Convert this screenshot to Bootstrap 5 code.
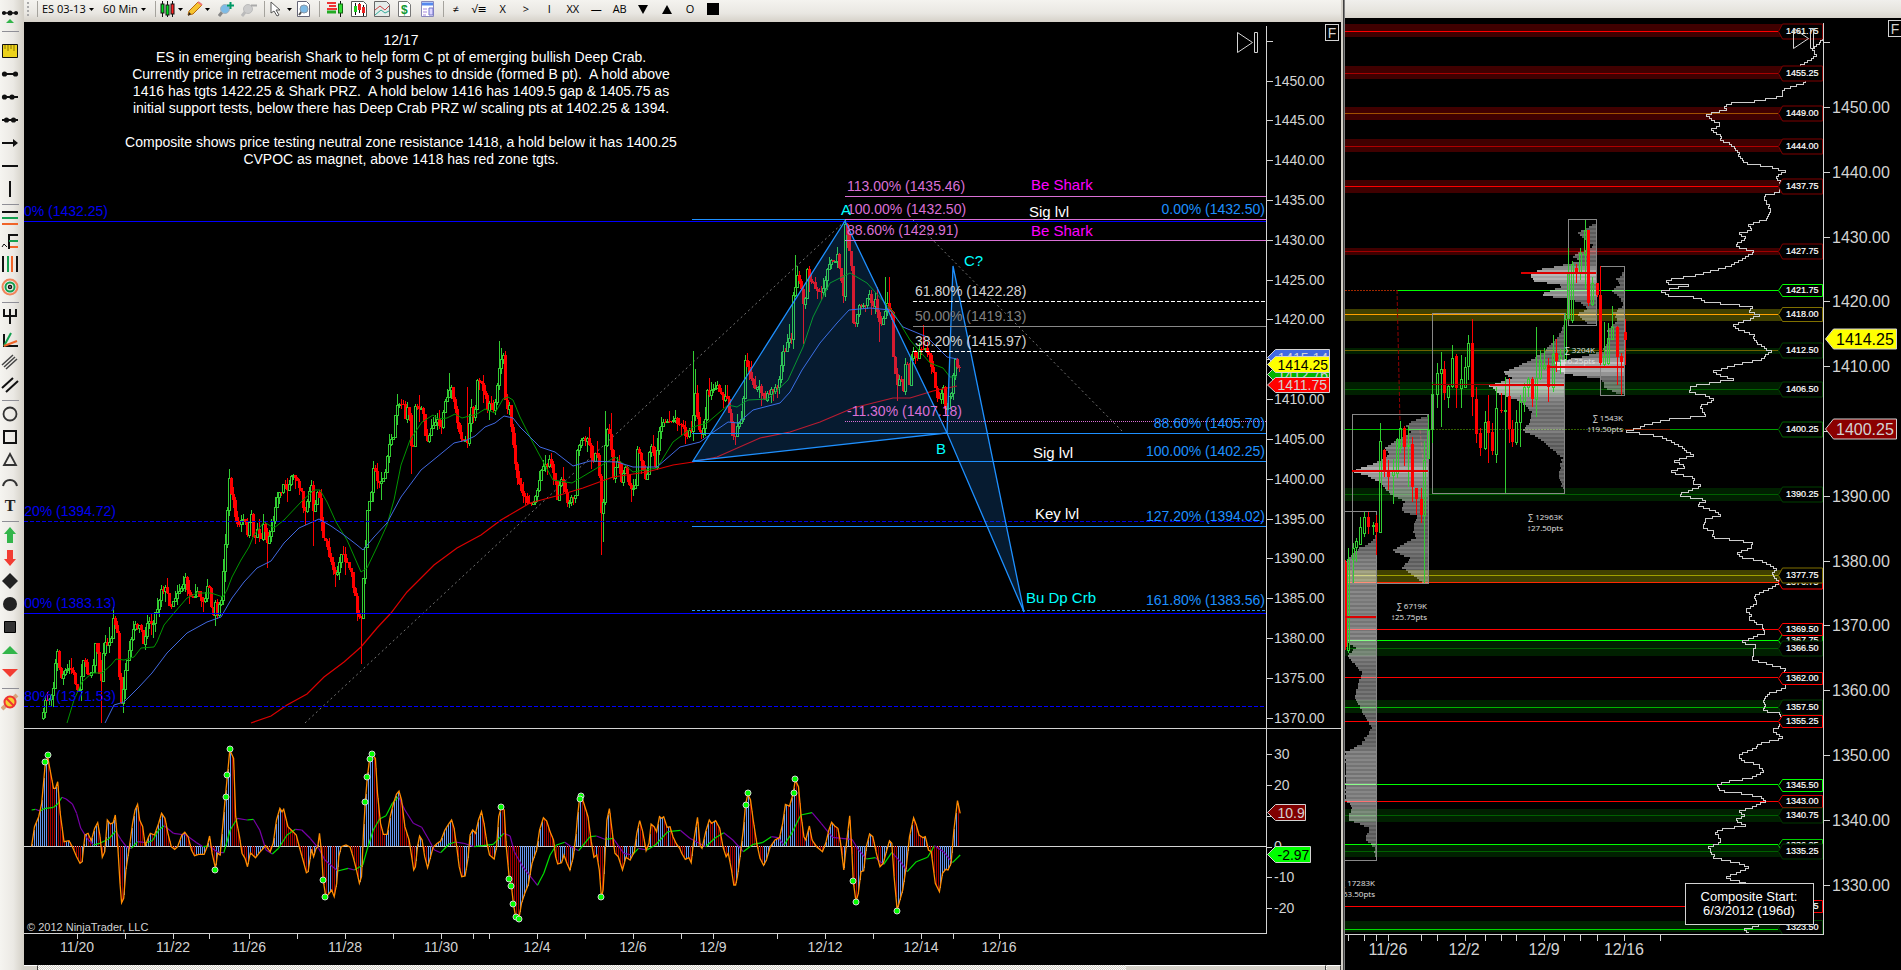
<!DOCTYPE html>
<html lang="en">
<head>
<meta charset="utf-8">
<meta name="viewport" content="width=device-width, initial-scale=1">
<title>ES 03-13 chart</title>
<link href="https://cdn.jsdelivr.net/npm/bootstrap@5.3.0/dist/css/bootstrap.min.css" rel="stylesheet">
<style>
body{background:#000;font-family:"Open Sans","DejaVu Sans",sans-serif;font-size:11px;color:#000}
.leftside{flex:1341 1 0;min-width:0}
.rightside{flex:556 1 0;min-width:0}
.workarea{min-width:0}
.sidetools{width:24px;background:linear-gradient(90deg,#f5f4f0,#ebe9e4 55%,#d3cfc6)}
.sidetools button,.toptools button{border:0;background:none;padding:0;display:flex;align-items:center;justify-content:center}
.sidetools button{width:20px;height:23px;flex:none}
.sidetools button.firsttool{height:27px}
.sidetools hr{width:17px;height:1px;margin:4px 0 1px 2px;border:0;background:#8f8f96;opacity:1;flex:none}
.sidetools hr.tallrule{margin-bottom:7px}
.toptools{height:22px;background:linear-gradient(#f4f3ef,#e9e7e2 60%,#d5d1c8);padding:0 0 4px 3px}
.toptools button{height:16px;flex:none}
.toptools svg{flex:none}
.toptools select{appearance:none;border:0;background:none;padding:0;font-size:11px;line-height:16px;height:16px;color:#000}
.symbolpick{width:46px}.spanpick{width:37px}
.toolrule{width:1px;height:16px;background:#a5a39d;flex:none}
.grip{width:2px;height:14px;background:repeating-linear-gradient(#aaa 0 2px,transparent 2px 4px);flex:none}
.marks{width:281px}
.marks button{flex:1 1 0}
.w15{width:15px}.w23{width:23px}
.chartbox{min-height:0;flex:1 1 0;background:#000}
.chartbox svg{display:block;width:100%;height:100%}
.fixbtn{position:absolute;right:2px;top:2px;width:14px;height:17px;padding:0;border:1px solid #d3d3d3;background:#000;color:#d3d3d3;font:14px/14px "Liberation Sans",sans-serif}
.fixbtn.edge{right:-1px}
.divide{width:4px;background:linear-gradient(90deg,#d4d0c8 0 2px,#404040 2px 3px,#808080 3px)}
.caphead{height:18px;background:linear-gradient(#f0efec,#e6e4de 60%,#d9d5cd)}
.scroller{height:5px;background:repeating-conic-gradient(#fff 0 25%,#d4d0c8 0 50%) 0 0/2px 2px}
.scroller span{background:#d4d0c8;border-top:1px solid #fff;border-right:1px solid #404040}
.capend{width:14px}.thumb{width:200px;margin-right:1px}
svg text{font-family:"Liberation Sans",Arial,sans-serif;white-space:pre}
svg text.tiny{font-family:"Open Sans",sans-serif}
svg text.slab{font-family:"Liberation Serif",serif}
.crisp{shape-rendering:crispEdges}
</style>
<script src="https://cdn.jsdelivr.net/npm/bootstrap@5.3.0/dist/js/bootstrap.bundle.min.js"></script>
</head>
<body class="m-0">
<div class="d-flex vh-100 overflow-hidden">
 <section class="leftside d-flex">
  <nav class="sidetools d-flex flex-column flex-shrink-0" id="sidetools" aria-label="Drawing tools"></nav>
  <div class="workarea d-flex flex-column flex-grow-1">
   <div class="toptools d-flex align-items-center">
    <span class="grip me-1"></span><span class="toolrule ms-1"></span>
    <select class="symbolpick ms-1" aria-label="Instrument"><option>ES 03-13</option></select>
    <svg width="7" height="5"><path d="M1 1h5L3.500 4z"/></svg>
    <select class="spanpick ms-2" aria-label="Interval"><option>60 Min</option></select>
    <svg width="7" height="5"><path d="M1 1h5L3.500 4z"/></svg>
    <span class="toolrule ms-2 me-1"></span>
    <button class="w23" aria-label="Chart style"><svg width="24" height="16"><g stroke="#111"><path d="M2.500 0v16M7.500 0v16M12.500 0v16"/><rect x="1" y="3" width="3" height="9" fill="#0d2"/><rect x="6" y="4" width="3" height="10" fill="#0d2"/><rect x="11" y="3" width="3" height="10" fill="#f22"/></g><path d="M18 7h5l-2.500 3z"/></svg></button>
    <button class="w23 ms-1" aria-label="Draw"><svg width="24" height="16"><path d="M1 14l1-4 9-9 4 3-9 9z" fill="#f6c430" stroke="#b76a10"/><path d="M1 15l1-4 2 2z" fill="#222"/><path d="M11 1l4 3" stroke="#e77" stroke-width="2"/><path d="M18 7h5l-2.500 3z"/></svg></button>
    <button class="w15 ms-2" aria-label="Zoom in"><svg width="16" height="16"><path d="M1 15l4-5" stroke="#888" stroke-width="3"/><circle cx="7" cy="8" r="4.500" fill="#7dbbe6" stroke="#a9b4bd"/><path d="M12.500 1v7M9 4.500h7" stroke="#096" stroke-width="2"/></svg></button>
    <button class="w15 ms-2" aria-label="Zoom out"><svg width="16" height="16"><path d="M1 15l4-5" stroke="#bbb" stroke-width="3"/><circle cx="7" cy="8" r="4.500" fill="#ccc" stroke="#bbb"/><path d="M10 4.500h6" stroke="#aaa" stroke-width="2"/></svg></button>
    <span class="toolrule ms-2 me-1"></span>
    <button class="w23" aria-label="Pointer"><svg width="24" height="16"><path d="M2 1v11l3-2 3 5 2-1-3-5h4z" fill="#fff" stroke="#555"/><path d="M18 7h5l-2.500 3z"/></svg></button>
    <button class="w15 ms-1" aria-label="Data box"><svg width="16" height="16"><path d="M1.500.500h9l3 3v12h-12z" fill="#fff" stroke="#667"/><path d="M3 14l3-4" stroke="#555" stroke-width="2"/><circle cx="8" cy="8" r="4" fill="#7dbbe6" stroke="#89a"/></svg></button>
    <span class="toolrule ms-2 me-1"></span>
    <button class="w15 ms-1" aria-label="Chart trader"><svg width="17" height="16"><path d="M0 2h9M0 8h10M2 5h7" stroke="#e33" stroke-width="2"/><path d="M0 11h9" stroke="#2a2" stroke-width="3"/><path d="M13.500 0v16" stroke="#111"/><rect x="11.500" y="3" width="4" height="9" fill="#3d3" stroke="#161"/></svg></button>
    <button class="w15 ms-2" aria-label="Data series"><svg width="16" height="16"><path d="M.500.500h12l3 3v12h-15z" fill="#fff" stroke="#555"/><path d="M4.500 2v12M8.500 2v10M12.500 4v11" stroke="#111"/><rect x="3" y="5" width="3" height="6" fill="#2c2"/><rect x="7" y="3" width="3" height="6" fill="#e22"/><rect x="11" y="6" width="3" height="6" fill="#e22"/></svg></button>
    <button class="w15 ms-2" aria-label="Indicators"><svg width="16" height="16"><path d="M.500.500h12l3 3v12h-15z" fill="#e4ece9" stroke="#666"/><path d="M1 9l5-4 5 4 4-4" fill="none" stroke="#c44"/><path d="M1 14l6-5 4 3 4-2" fill="none" stroke="#3a9"/></svg></button>
    <button class="w15 ms-2" aria-label="Strategies"><svg width="16" height="16"><path d="M1.500.500h9l3 3v12h-12z" fill="#fff" stroke="#777"/><text x="4" y="13" font-size="12" font-weight="700" fill="#193">$</text></svg></button>
    <button class="w15 ms-2" aria-label="Properties"><svg width="16" height="16"><path d="M1.500.500h12v15h-12z" fill="#fff" stroke="#88b"/><path d="M2 3h11" stroke="#58e" stroke-width="3"/><path d="M3 8h4M3 11h4M3 14h3" stroke="#a8d"/><path d="M9 7h4v7H9z" fill="#dcd6ff" stroke="#77c"/></svg></button>
    <span class="toolrule ms-2"></span>
    <div class="marks d-flex"><button>≠</button><button>√≡</button><button>X</button><button>&gt;</button><button>I</button><button>XX</button><button>—</button><button>AB</button><button aria-label="Triangle down"><svg width="10" height="9"><path d="M0 0h10L5 9z"/></svg></button><button aria-label="Triangle up"><svg width="10" height="9"><path d="M0 9h10L5 0z"/></svg></button><button>O</button><button aria-label="Square"><svg width="12" height="12"><path d="M0 0h12v12H0z"/></svg></button></div>
   </div>
   <div class="chartbox position-relative"><svg id="mainchart" viewBox="24 22 1317 943" role="img" aria-label="ES 60 minute chart"></svg><button class="fixbtn">F</button></div>
   <div class="scroller d-flex flex-shrink-0"><span class="capend"></span><span class="thumb ms-auto"></span><span class="capend"></span></div>
  </div>
 </section>
 <div class="divide flex-shrink-0"></div>
 <section class="rightside d-flex flex-column">
  <header class="caphead flex-shrink-0"></header>
  <div class="chartbox position-relative overflow-hidden"><svg id="sidechart" viewBox="1345 18 556 952" role="img" aria-label="Composite profile chart"></svg><button class="fixbtn edge">F</button></div>
 </section>
</div>
<script>
/* ---------- drawing tool icons ---------- */
const ic=b=>`<svg width="18" height="18" viewBox="0 0 18 18" fill="none" stroke="#111" stroke-width="2">${b}</svg>`;
const tools=[
 ['Markers','<path d="M1 8h16" stroke-width="1.500"/><g fill="#111" stroke="none"><circle cx="3" cy="8" r="2"/><circle cx="9" cy="8" r="2.500"/><circle cx="15" cy="8" r="2"/></g><path d="M4 19l5-5 5 5z" fill="#33b54a" stroke="none"/>'],0,
 ['Ruler','<path d="M1.500 2.500h15v13h-15z" fill="#ecd21c" stroke-width="1"/><path d="M4 3v4M7 3v6M10 3v4M13 3v6" stroke="#8a7400" stroke-width="1"/>'],
 ['Line','<path d="M3 9h12"/><g fill="#111" stroke="none"><circle cx="3.500" cy="9" r="2.600"/><circle cx="14.500" cy="9" r="2.600"/></g>'],
 ['Ray','<path d="M3 9h14"/><g fill="#111" stroke="none"><circle cx="3.500" cy="9" r="2.600"/><circle cx="11" cy="9" r="2.600"/></g>'],
 ['Extended line','<path d="M1 9h16"/><g fill="#111" stroke="none"><circle cx="5.500" cy="9" r="2.600"/><circle cx="12.500" cy="9" r="2.600"/></g>'],
 ['Arrow line','<path d="M1 9h14"/><path d="M12 5l5 4-5 4z" fill="#111" stroke="none"/>'],
 ['Horizontal line','<path d="M1 9h16"/>'],['Vertical line','<path d="M9 1v16"/>'],0,
 ['Fibonacci retracement','<path d="M1 3h16"/><path d="M1 9h16" stroke="#14a050"/><path d="M1 15h16" stroke="#f06428"/>'],
 ['Fibonacci extension','<path d="M8 17V3h9"/><path d="M8 9h9" stroke="#14a050"/><path d="M9 15h8" stroke="#f06428"/><path d="M1 15l2-3 3 3" stroke-width="1"/>'],
 ['Fibonacci time','<path d="M2 1v16"/><path d="M7 1v16" stroke="#14a050"/><path d="M11 1v16" stroke="#f06428"/><path d="M16 1v16"/>'],
 ['Fibonacci circle','<circle cx="9" cy="9" r="7.500" stroke="#f0845a"/><circle cx="9" cy="9" r="4.500" stroke="#14a050"/><circle cx="9" cy="9" r="1.500" stroke-width="1.500"/>'],0,
 ['Pitchfork','<path d="M3 2v7h12V2M9 2v15"/>'],
 ['Gann fan','<path d="M3 4v12h14"/><path d="M3 16L10 3" stroke="#14a050"/><path d="M3 16l13-5" stroke="#f06428"/>'],
 ['Regression channel','<path d="M1 12L12 2M3 14L14 4M5 16L16 6" stroke="#444" stroke-width="1.500"/>'],
 ['Trend channel','<path d="M1 12L12 2M5 16L17 5"/>'],0,
 ['Ellipse','<circle cx="9" cy="9" r="6.500" stroke="#333" stroke-width="1.800"/>'],['Rectangle','<path d="M3 3h12v12H3z"/>'],
 ['Triangle','<path d="M9 3l6 11H3z" stroke="#333" stroke-width="1.800"/>'],['Arc','<path d="M2 12c2-8 12-8 14 0" stroke="#333"/>'],
 ['Text','<text class="slab" x="9" y="14" text-anchor="middle" font-size="16" font-weight="700" fill="#222" stroke="none">T</text>'],0,
 ['Arrow up','<path d="M9 1l6 7h-3v9H6V8H3z" fill="#33b54a" stroke="none"/>'],['Arrow down','<path d="M9 17l6-7h-3V1H6v9H3z" fill="#f23c32" stroke="none"/>'],
 ['Diamond','<path d="M9 1l8 8-8 8-8-8z" fill="#222" stroke="none"/>'],['Dot','<circle cx="9" cy="9" r="7" fill="#222" stroke="none"/>'],
 ['Square','<path d="M3.500 3.500h11v11h-11z" fill="#333" stroke="#000" stroke-width="1"/>'],
 ['Triangle up','<path d="M1 13l8-8 8 8z" fill="#33b54a" stroke="none"/>'],['Triangle down','<path d="M1 5l8 8 8-8z" fill="#f23c32" stroke="none"/>'],0,
 ['Remove drawings','<path d="M1 16L16 2" stroke="#d9a27a" stroke-width="4"/><circle cx="9" cy="9" r="5.500" fill="#f5d030" stroke="#e33"/><path d="M5 5l8 8" stroke="#e33"/>']];
let seps=0;
document.getElementById('sidetools').innerHTML=tools.map((t,i)=>t?`<button aria-label="${t[0]}" class="${i?'':'firsttool'}">${ic(t[1])}</button>`:`<hr class="${seps++?'':'tallrule'}">`).join('');

/* ---------- helpers ---------- */
const pairs=s=>s.trim().split(/\s+/).map(p=>p.split(',').map(Number));
const conv=(s,ox,sx,oy)=>pairs(s).map(([x,y])=>[ox+x/sx,oy+y/3]);
const poly=(pts,c,w=1,x='')=>`<polyline points="${pts.map(p=>p[0].toFixed(1)+','+p[1].toFixed(1)).join(' ')}" fill="none" stroke="${c}" stroke-width="${w}" ${x}/>`;
const txt=(x,y,s,c,z=14,a='start',e='')=>`<text x="${x}" y="${y}" fill="${c}" font-size="${z}" text-anchor="${a}" ${e}>${s}</text>`;
const hl=(x1,x2,y,c,x='',w=1)=>`<path class="crisp" d="M${x1} ${y}.5H${x2}" stroke="${c}" stroke-width="${w}" ${x}/>`;
const rect=(x,y,w,h,f,e='')=>`<rect x="${x}" y="${y}" width="${w}" height="${h}" fill="${f}" ${e}/>`;
function at(p,x){for(let i=1;i<p.length;i++)if(x<=p[i][0]){const a=p[i-1],b=p[i];return a[1]+(b[1]-a[1])*(x-a[0])/((b[0]-a[0])||1)}return p[p.length-1][1]}
let seed=7;const rnd=()=>(seed=(seed*16807)%2147483647)/2147483647;
const G='#32cd32',R='#ff0000',LG='#d3d3d3',DB='#1e90ff',OR='#da70d6';

/* ---------- main chart ---------- */
const price=pairs(`43,715 45,700 49,698 53,687 56,652 58,653 60,680 64,673 70,667 74,677 78,695 83,658 87,673 92,670 96,637 100,690 104,643 110,643 113,618 117,633 119,678 121,705 124,678 129,653 133,630 137,625 141,630 143,647 147,620 152,623 157,607 161,588 166,590 170,607 176,593 181,587 185,580 189,595 196,593 202,602 208,587 210,590 212,627 215,600 217,618 221,597 224,560 226,523 229,480 231,492 233,503 237,525 244,520 247,532 251,517 254,543 257,527 261,540 263,522 267,542 271,530 273,523 276,495 281,490 284,483 287,487 292,477 296,477 301,490 304,515 307,500 311,485 314,528 316,485 320,503 322,537 327,548 332,565 336,575 341,553 346,563 351,573 354,592 358,620 361,619 363,577 365,550 367,507 370,500 373,465 377,482 384,478 388,452 390,435 393,440 396,400 400,405 403,402 406,425 408,395 411,447 413,445 415,403 419,410 423,413 425,437 428,438 432,422 437,422 441,425 444,405 449,388 452,392 454,405 458,432 462,438 465,440 468,440 470,405 472,403 474,425 477,383 482,385 484,392 487,408 492,403 494,415 497,385 500,362 503,358 506,420 508,399 513,447 517,480 525,498 532,505 538,487 541,467 547,463 550,460 553,470 557,497 561,480 568,503 572,500 575,493 577,447 582,440 587,437 592,460 597,453 600,487 602,532 604,473 606,423 610,440 613,477 618,460 621,480 625,467 630,487 635,483 637,450 642,460 646,487 650,438 655,467 659,430 665,422 670,418 675,420 682,423 685,437 691,430 692,453 694,380 697,420 700,438 705,417 707,393 712,390 717,385 722,400 727,397 730,420 734,438 738,422 742,417 745,363 750,377 755,387 760,390 765,400 770,390 778,387 782,357 787,343 791,337 793,293 797,277 802,290 804,312 807,272 812,283 817,290 821,293 825,283 828,263 833,262 837,257 840,277 843,297 845,227 848,240 851,267 853,320 856,322 860,303 865,303 868,290 872,307 875,300 878,323 883,320 887,303 891,310 893,357 897,387 900,372 903,390 906,350 909,383 912,348 917,357 921,347 928,353 932,367 937,400 940,397 943,390 946,420 948,397 952,393 954,350 957,367 960,365`);
const spikes={101:[0,723],229:[469,0],267:[0,568],313:[0,546],361:[0,664],411:[0,474],449:[373,0],499:[341,0],501:[348,0],601:[0,555],603:[0,542],605:[411,0],611:[413,0],693:[351,0],695:[369,0],795:[255,0],803:[0,344],843:[0,303],845:[220,0],879:[0,342],885:[277,0],889:[277,0],897:[0,401],923:[325,0],381:[0,500],467:[387,0]};
let cs='',prev=718;
for(let x=43;x<=959;x+=2){
 const base=at(price,x),c=Math.round(base+(rnd()-.5)*7);
 let hi=Math.min(prev,c)-rnd()*rnd()*15,lo=Math.max(prev,c)+rnd()*rnd()*15;
 const s=spikes[x];if(s){if(s[0])hi=s[0];if(s[1])lo=s[1]}
 lo=Math.min(lo,723);
 const up=c<prev,col=up?G:R,t=Math.min(prev,c),h=Math.max(1,Math.abs(prev-c));
 cs+=`<path d="M${x+.5} ${hi.toFixed(0)}V${lo.toFixed(0)}" stroke="${col}"/>`;
 cs+=up?`<rect x="${x-.5}" y="${t+.5}" width="2" height="${h}" fill="#000" stroke="${col}"/>`:rect(x-1,t,3,h,col);
 prev=c;
}
const maG=pairs('67,723 74,700 82,682 92,673 102,673 111,665 116,659 124,660 134,657 141,648 154,647 157,642 164,625 174,613 187,598 197,593 211,593 223,597 227,590 232,577 241,560 249,547 254,535 264,522 274,528 284,520 301,502 314,490 320,490 327,502 336,522 347,540 361,572 367,568 377,547 387,525 394,500 401,465 410,440 422,422 433,415 438,419 447,418 455,414 462,418 477,414 485,409 495,413 503,399 508,397 513,400 520,417 533,443 553,480 572,483 597,468 615,457 633,472 657,468 673,442 693,427 707,423 728,405 737,407 748,400 768,399 788,380 803,347 813,317 830,283 850,273 867,283 893,312 910,340 930,363 943,368 950,377 957,377');
const maB=pairs('105,723 114,705 124,702 139,687 152,673 167,653 187,633 207,622 221,617 232,598 244,582 257,568 271,561 284,543 299,528 319,519 331,526 344,535 357,545 363,550 374,537 387,523 401,497 421,470 437,457 454,443 467,440 475,436 485,427 495,423 504,416 513,418 520,427 540,447 555,452 573,466 590,461 617,462 633,467 657,467 680,447 700,442 712,433 728,422 738,423 753,410 780,403 790,392 802,370 820,343 837,323 849,310 870,308 890,310 903,327 927,337 947,357 957,359');
const maR=pairs('251,723 271,716 287,705 307,694 324,677 344,662 361,647 377,628 391,613 407,592 434,565 457,548 481,535 501,520 530,503 560,495 583,488 613,477 647,472 673,465 693,462 717,457 760,438 790,432 820,422 853,408 893,398 910,398 933,391 957,386');
let m='';
m+=poly([[305,723],[845,221]],'#777',1,'stroke-dasharray="2 3"')+poly([[913,220],[1123,432]],'#777',1,'stroke-dasharray="2 3"');
m+=`<g class="crisp">${cs}</g>`;
m+=poly(maG,'#009600')+poly(maB,'#4169e1')+poly(maR,'#dc0000',1.2);
m+=hl(24,1266,221,'#00f')+hl(24,1266,521,'#0000e6','stroke-dasharray="4 2"')+hl(24,1266,613,'#00f')+hl(24,1266,706,'#00f','stroke-dasharray="4 2"');
m+=`<g fill="${DB}" fill-opacity=".19" stroke="${DB}" stroke-width="1.3"><path d="M693 461L845 221L947 433z"/><path d="M947 433L953 266L1024 612z"/></g>`;
m+=hl(692,845,219,DB)+hl(845,1266,219,OR)+hl(845,1266,196,OR)+hl(845,1266,240,OR)+hl(845,1266,421,OR,'stroke-dasharray="1 1"');
m+=hl(913,1266,301,'#fff','stroke-dasharray="4 2"')+hl(913,1266,326,'#888')+hl(913,1266,351,'#fff','stroke-dasharray="4 2"');
m+=hl(692,1266,433,DB)+hl(692,1266,461,DB)+hl(692,1266,526,DB)+hl(692,1266,610,DB,'stroke-dasharray="3 2"');
[[191,'113.00% (1435.46)'],[214,'100.00% (1432.50)'],[235,'88.60% (1429.91)'],[416,'-11.30% (1407.18)']].forEach(a=>m+=txt(847,a[0],a[1],OR));
m+=txt(915,296,'61.80% (1422.28)',LG)+txt(915,321,'50.00% (1419.13)','#808080')+txt(915,346,'38.20% (1415.97)',LG);
[[214,'0.00% (1432.50)'],[428,'88.60% (1405.70)'],[456,'100.00% (1402.25)'],[521,'127.20% (1394.02)'],[605,'161.80% (1383.56)']].forEach(a=>m+=txt(1265,a[0],a[1],DB,14,'end'));
[[108,216,'0% (1432.25)'],[116,516,'20% (1394.72)'],[116,608,'00% (1383.13)'],[116,701,'80% (1371.53)']].forEach(a=>m+=txt(a[0],a[1],a[2],'#0000f0',14,'end'));
[[1031,190,'Be Shark','#f0f'],[1029,217,'Sig lvl','#fff'],[1031,236,'Be Shark','#f0f'],[1033,458,'Sig lvl','#fff'],[1035,519,'Key lvl','#fff'],[964,266,'C?','#0ff'],[841,215,'A','#0ff'],[936,454,'B','#0ff'],[1026,603,'Bu Dp Crb','#0ff']].forEach(a=>m+=txt(a[0],a[1],a[2],a[3],15));
['12/17','ES in emerging bearish Shark to help form C pt of emerging bullish Deep Crab.','Currently price in retracement mode of 3 pushes to dnside (formed B pt).\u00a0 A hold above','1416 has tgts 1422.25 &amp; Shark PRZ.\u00a0 A hold below 1416 has 1409.5 gap &amp; 1405.75 as','initial support tests, below there has Deep Crab PRZ w/ scaling pts at 1402.25 &amp; 1394.','','Composite shows price testing neutral zone resistance 1418, a hold below it has 1400.25','CVPOC as magnet, above 1418 has red zone tgts.'].forEach((s,i)=>{if(s)m+=txt(401,45+i*17,s,'#fff',14,'middle')});
/* axes */
m+=`<g class="crisp" stroke="${LG}"><path d="M1266.500 26V933.500M24 933.500H1267M24 728.500H1341"/>`;
for(let p=1370;p<=1455;p+=5)m+=`<path d="M1267 ${Math.round(200+(1435-p)*7.965)}.5h6"/>`;
[785,754,816,847,877,908].forEach(y=>m+=`<path d="M1267 ${y}.5h5"/>`);
[77,125,173,209,249,297,345,393,441,473,489,537,585,633,681,713,777,825,873,921,953,999].forEach(x=>m+=`<path d="M${x}.5 934v5"/>`);
m+='</g>';
for(let p=1370;p<=1450;p+=5)if(p!==1415)m+=txt(1274,Math.round(205+(1435-p)*7.965),p+'.00',LG);
[[759,'30'],[790,'20'],[851,'0'],[882,'-10'],[913,'-20']].forEach(a=>m+=txt(1274,a[0],a[1],LG));
[[77,'11/20'],[173,'11/22'],[249,'11/26'],[345,'11/28'],[441,'11/30'],[537,'12/4'],[633,'12/6'],[713,'12/9'],[825,'12/12'],[921,'12/14'],[999,'12/16']].forEach(a=>m+=txt(a[0],952,a[1],LG,14,'middle'));
const tag=(x,y,x2,h,f,s,c,z)=>`<path d="M${x} ${y+h/2}l8 ${-h/2}H${x2}v${h}H${x+8}z" fill="${f}" stroke="${LG}"/>`+txt(x+10,y+h/2+5,s,c,z);
m+=tag(1267.5,349.5,1329.5,16,'#4169e1','1415.14',LG,14)+tag(1267.5,366.5,1329.5,16,'#00b400','1412.76',LG,14)+tag(1267.5,377.5,1329.5,15,'#f00','1411.75',LG,14)+tag(1267.5,356.5,1329.5,16,'#ff0','1414.25','#000',14);
m+=tag(1267.5,804.5,1305.5,16,'#800000','10.9',LG,14)+tag(1267.5,846.5,1310.5,16,'#0f0','-2.97','#000',14);
m+=`<path d="M1237.500 32.500v20l15-10zM1254.500 32.500h3v20h-3z" fill="none" stroke="${LG}"/>`;
/* oscillator */
const osc=conv(`18,379 25,320 35,290 42,250 50,140 56,110 62,150 70,205 75,205 80,185 86,280 95,365 107,362 115,380 125,410 133,430 138,425 145,345 152,340 160,362 168,325 175,308 180,345 186,412 192,395 198,300 205,312 212,308 217,285 222,360 228,490 232,548 237,535 242,450 250,385 258,310 264,270 270,253 275,300 282,320 288,378 296,350 300,340 310,345 320,310 327,280 335,295 342,340 350,380 358,388 365,380 375,345 382,337 390,350 398,390 405,407 415,403 428,403 435,380 441,348 447,400 455,445 460,400 466,405 472,320 478,235 483,170 489,90 498,115 503,290 512,350 518,400 525,415 531,440 538,398 550,413 560,397 574,377 585,395 592,370 600,300 608,265 613,275 617,268 627,320 635,330 647,345 655,385 663,420 671,458 675,455 683,388 688,410 694,385 698,380 702,340 707,400 711,480 717,530 722,525 731,510 737,530 743,490 748,410 754,380 765,375 775,382 783,415 790,450 797,490 802,470 807,330 811,245 816,170 821,120 827,105 835,115 840,220 847,310 854,343 863,343 870,290 878,250 885,222 891,213 897,240 905,320 915,360 920,400 926,450 930,440 935,380 940,348 946,360 952,410 959,443 966,410 972,382 982,370 990,363 1000,330 1010,310 1016,300 1022,325 1028,380 1034,440 1040,470 1048,468 1055,415 1060,345 1066,330 1073,340 1080,300 1087,275 1093,310 1100,370 1106,405 1117,417 1123,380 1128,290 1134,262 1141,270 1146,380 1153,475 1158,497 1163,553 1168,590 1176,596 1182,550 1190,520 1198,495 1207,430 1218,390 1225,330 1234,293 1242,303 1250,335 1258,360 1263,410 1268,432 1277,428 1283,405 1290,430 1297,450 1305,412 1311,350 1315,290 1320,235 1325,230 1330,250 1340,290 1348,365 1354,412 1361,405 1367,450 1372,532 1376,510 1380,420 1385,300 1391,266 1397,330 1404,400 1412,410 1422,450 1430,412 1440,420 1450,395 1456,340 1463,302 1470,335 1478,392 1485,370 1490,312 1497,320 1503,335 1510,290 1515,295 1520,290 1528,322 1535,320 1542,350 1550,372 1558,385`,24,2.376,720)
 .concat(conv(`92,400 100,418 108,413 113,428 118,370 127,292 133,378 137,385 145,335 153,300 158,310 167,302 176,325 183,380 190,410 195,400 202,450 207,495 211,495 215,470 222,400 228,330 233,255 238,222 244,240 250,300 258,370 265,415 273,436 279,420 287,382 298,360 308,353 315,310 321,253 330,258 338,222 343,180 350,200 356,290 362,350 366,360 374,318 380,360 390,380 403,395 410,370 417,330 423,307 430,318 437,325 443,370 450,450 456,370 463,287 467,370 471,485 477,545 482,520 488,455 494,452 500,380 507,342 514,350 522,400 530,440 537,430 545,390 551,362 556,370 561,470 568,570 573,545 580,510 588,440 595,350 604,293 610,315 616,345 625,353 630,350 637,390 643,395 652,490 661,515 668,460 675,448 680,450 687,430 693,330 701,242 707,280`,640,2.208,720));
const sig=conv(`18,270 27,268 38,273 48,266 70,262 80,252 90,232 100,237 115,252 125,280 135,325 150,355 165,375 180,370 200,358 218,333 230,358 245,383 255,385 270,365 290,368 305,362 320,330 333,317 355,340 385,345 410,368 425,380 440,378 460,397 475,398 490,330 507,295 530,300 545,298 560,330 575,390 590,402 605,385 625,345 645,328 660,330 680,355 700,385 715,420 745,453 770,445 785,450 805,435 815,390 830,330 845,297 860,287 875,250 890,230 905,270 925,310 945,322 960,355 975,390 990,398 1010,372 1025,366 1045,370 1070,380 1090,377 1115,373 1140,340 1155,348 1165,395 1185,440 1220,496 1235,460 1250,405 1265,375 1285,367 1300,380 1318,392 1345,350 1360,348 1380,358 1400,355 1425,400 1445,405 1460,385 1480,390 1500,375 1530,335 1560,331`,24,2.376,720)
 .concat(conv(`90,332 110,355 145,380 165,355 185,338 205,360 228,395 250,373 270,368 290,350 305,353 318,375 335,340 355,285 380,278 400,310 425,352 445,355 468,358 480,385 500,417 520,413 538,433 556,397 575,425 590,455 610,425 635,412 650,377 670,395 690,428 707,405`,640,2.208,720));
m+=hl(24,1266,846,LG);
let bars='';
for(let x=32;x<=959;x+=2){const y=at(osc,x),up=at(osc,x+.6)<=at(osc,x-1);bars+=`<path d="M${x+.5} 846V${y.toFixed(0)}" stroke="${up?'#6495ed':'#a00000'}"/>`}
m+=`<g class="crisp">${bars}</g>`;
for(let i=1;i<sig.length;i++)m+=poly([sig[i-1],sig[i]],sig[i][1]<sig[i-1][1]?'#00e000':'#7800a8',1.2);
m+=poly(osc,'#ff8c00',1.3);
conv('51,125 56,106 489,86 483,166 479,232 455,449 711,481 716,532 811,247 816,170 821,118 826,103 1134,262 1153,476 1158,497 1163,553 1168,590 1176,596 1324,229 1320,236 1372,532',24,2.376,720).concat(conv('233,254 238,220 339,220 343,178 471,484 476,547 568,574',640,2.208,720)).forEach(p=>m+=`<circle cx="${p[0].toFixed(0)}" cy="${p[1].toFixed(0)}" r="3" fill="#0f0" stroke="${LG}"/>`);
m+=txt(27,931,'© 2012 NinjaTrader, LLC',LG,11);
document.getElementById('mainchart').innerHTML=m;

/* ---------- composite chart ---------- */
let s='';const L=1345,E=1778;
const band=(y,h,c)=>rect(L,y,E-L+4,h,c);
[[24,13],[66,13],[107,13],[139,13],[180,13],[248,7]].forEach(b=>s+=band(b[0],b[1],'#400000'));
s+=band(309,12,'#404000')+band(570,12,'#404000');
[[348,6],[382,13],[488,13],[640,16],[700,13],[809,13],[845,12],[921,11]].forEach(b=>s+=band(b[0],b[1],'#002000'));
[[31,'#f00'],[73,'#a80000'],[113,'#a05000'],[146,'#b00000'],[186,'#f00'],[251,'#a00000'],[314,'#ffa000'],[350,'#706000'],[389,'#006000'],[494,'#006000'],[575,'#a0a000'],[582,'#ff2800'],[629,'#f00'],[640,'#0f0'],[648,'#006000'],[677,'#f00'],[707,'#00b400'],[721,'#f00'],[784,'#0f0'],[801,'#f00'],[815,'#006000'],[844,'#0f0'],[851,'#006000'],[906,'#f00'],[929,'#00dc00']].forEach(a=>s+=hl(L,E,a[0],a[1]));
s+=hl(1397,E,290,'#0f0')+hl(L,1397,290,'#a02800','stroke-dasharray="2 1"')+hl(L,1430,429,'#00c000')+hl(1430,1625,429,'#306000','stroke-dasharray="2 1"')+hl(1625,1670,429,'#802000')+hl(1670,E,429,'#00a000');
s+=poly([[1397,290],[1400,422]],'#900000',1,'stroke-dasharray="4 2"')+poly([[1420,430],[1424,470]],'#600000',1,'stroke-dasharray="4 2"');
const rx=x=>1340+x/2.795;
function profile(edge,right,x0,y0,x1,y1){
 let o='';const min=Math.min(...edge.map(e=>e[1]));
 for(let y=edge[0][0];y<edge[edge.length-1][0];y+=2){
  const l=at(edge,y)+(rnd()-.5)*2,f=(right-l)/(right-min),wide=(right-min)<34?.12:.32;
  o+=rect(l.toFixed(1),y.toFixed(0),(right-l).toFixed(1),2,'#fff',`fill-opacity="${(.34+wide*f*f+((y>>1)%2?.07:0)).toFixed(2)}"`);
 }
 return `<g class="crisp">${o}</g><rect class="crisp" x="${x0}.5" y="${y0}.5" width="${x1-x0}" height="${y1-y0}" fill="none" stroke="#888"/>`;
}
const edge=(t,oy)=>pairs(t).map(([x,y])=>[Math.round(oy+y/3),rx(x)]);
s+=profile(edge('100,705 85,725 50,745 15,780 15,1023 45,1040 20,1065 62,1120 40,1190 88,1280 60,1330 15,1353 15,1495 33,1520 22,1555 82,1582 72,1615 98,1640 98,1670',300),1376,1340,511,1376,860);
s+=profile(edge('240,345 205,360 185,375 200,395 165,415 125,440 140,460 100,485 50,505 40,512 80,525 110,545 140,580 180,600 170,630 215,645 205,690 210,710 145,750 195,770 175,800 215,830 240,848',300),1428,1352,414,1428,583);
s+=profile(edge('627,70 615,100 580,140 545,170 500,195 455,215 480,230 420,255 445,280 500,300 535,330 530,365 510,390 555,410 590,440 620,470 610,520 625,570',300),1564,1432,313,1564,493);
s+=profile(edge('715,665 665,695 680,710 710,735 650,765 668,780 600,797 565,805 530,820 540,840 630,855 560,880 570,886 640,895 680,910 690,925 665,940 675,955 700,972',0),1596,1568,219,1596,325);
s+=profile(edge('792,815 775,835 785,850 760,870 785,895 790,915 765,935 775,960 745,990 750,1020 735,1050 690,1065 600,1082 605,1105 635,1120 730,1135 740,1162 780,1180',0),1624,1600,266,1624,395);
let rc='';
const kd=(a,oy)=>a.split(' ').forEach(k=>{let [x,h,l,t,b,c]=k.split(',');x=Math.round(rx(+x));const y=v=>Math.round(oy+v/3),bh=Math.max(1,y(b)-y(t)),col=c==='g'?G:R;
 rc+=`<path d="M${x+.5} ${y(h)}V${c==='g'?y(t):y(l)}${c==='g'?`M${x+.5} ${y(b)}V${y(l)}`:''}" stroke="${col}"/>`+(c==='g'?`<rect x="${x-.5}" y="${y(t)+.5}" width="2" height="${bh}" fill="none" stroke="${col}"/>`:rect(x-1,y(t),3,bh,col))});
kd('15,780,1050,785,1040,r 23,745,1060,778,1050,g 35,730,850,745,778,g 46,715,785,722,740,g 57,650,735,682,732,g 68,635,712,652,700,g 79,635,702,652,682,r 91,665,705,676,678,g 102,645,765,670,695,r 113,370,695,424,695,g 124,447,530,450,512,r 135,480,570,512,530,r 147,478,613,512,526,g 158,415,535,418,520,g 169,363,460,385,440,g 180,378,498,385,440,r 191,378,560,436,438,g 202,410,605,432,560,r 213,563,645,565,598,r 225,563,670,597,645,r 236,423,850,480,645,g 247,345,475,390,473,g 258,245,430,283,388,g 270,188,325,220,283,g 281,157,380,207,220,g 292,183,300,207,278,r 303,253,325,257,292,g 314,135,265,175,258,g 325,163,325,167,263,r 337,165,323,238,263,g 348,170,265,200,260,g 359,105,240,130,198,g 370,57,348,130,292,r 381,262,430,297,402,r 392,385,467,400,443,r 404,333,450,365,443,g 415,285,490,362,400,r 426,370,465,395,453,r 437,262,490,325,463,g 449,280,340,330,332,r 460,230,580,330,332,g 471,235,430,287,387,r 482,360,440,387,425,r 493,330,435,365,425,g 504,285,440,303,365,g 515,250,335,262,303,g 526,230,290,237,262,g 538,232,322,237,298,r 549,80,350,233,298,g 560,150,240,180,235,g 571,143,210,195,203,g 582,175,305,195,262,r 594,105,275,162,262,g 605,117,215,160,182,r 616,148,222,165,178,g 628,38,185,58,178,g',300);
kd('638,745,960,820,955,g 649,783,970,792,960,g 660,793,850,805,820,r 672,745,840,760,820,g 684,660,868,690,762,g 694,690,917,690,910,r 705,832,917,848,912,g 717,848,890,850,885,r 728,799,1095,885,1090,r 739,965,1105,1068,1092,g 750,968,1095,1015,1090,g 761,918,1020,982,1018,g 773,978,1155,982,1070,r 784,1060,1185,1068,1087,r 796,958,1095,996,1020,r',0);
s+=`<g class="crisp">${rc}</g>`;
s+=hl(1345,1376,616,'#dc0000','',2)+hl(1352,1428,470,'#dc0000','',2)+hl(1432,1490,384,'#900000')+hl(1490,1564,384,'#dc0000','',2)+hl(1521,1596,272,'#dc0000','',2)+hl(1548,1624,366,'#dc0000','',2);
/* composite volume curve, drawn in small steps */
function steps(p){let d='',y=p[0][1];d=`M${p[0][0].toFixed(0)} ${y.toFixed(0)}`;
 for(;y<p[p.length-1][1];y+=2){let x;for(let i=1;i<p.length;i++)if(y<=p[i][1]){const a=p[i-1],b=p[i];x=a[0]+(b[0]-a[0])*(y-a[1])/((b[1]-a[1])||1);break}
 x+=(rnd()-.5)*2;d+=`V${y.toFixed(0)}H${x.toFixed(0)}`}return `<path class="crisp" d="${d}" fill="none" stroke="#ccc"/>`}
const cv=(t,oy)=>conv(t,1340,2.795,oy);
s+=steps(cv('1345,115 1340,125 1320,140 1330,165 1305,182 1280,196 1290,220 1300,245 1240,265 1230,280 1240,285 1200,292 1170,300 1100,305 1070,315 1080,325 1040,335 1025,342 1035,355 1063,368 1035,388 1068,405 1060,418 1085,425 1105,445 1118,470 1135,488 1190,495 1245,510 1215,532 1230,540 1230,572 1180,585 1195,610 1203,635 1190,655 1140,672 1153,688 1115,697 1135,710 1100,735 1160,752 1138,765 1090,795 1040,810 985,825 910,838 920,850 970,853 895,870 920,885 1000,890 1020,903 1110,912 1150,918 1145,932 1170,943',0)
 .concat(cv('1140,57 1098,72 1115,85 1155,103 1165,125 1205,152 1175,175 1110,190 1038,213 1075,228 1095,235 1040,245 980,255 975,272 1020,283 1048,297 1005,315 1020,345 920,355 860,370 800,392 890,405 920,420 955,440 985,463 935,480 970,497 918,512 990,530 985,545 1008,555 945,582 1028,598 995,612 1040,628 1065,642 1020,655 1010,678 1045,692 1040,708 1150,725 1150,740 1110,755 1120,768 1180,780 1220,805 1205,820 1225,845',300),
 cv('1225,8 1170,38 1155,45 1165,65 1132,88 1150,100 1142,115 1180,135 1188,155 1118,183 1160,193 1150,235 1200,250 1240,262 1245,275 1245,320 1195,340 1185,360 1190,375 1180,388 1230,398 1232,430 1208,450 1240,470 1170,488 1165,500 1115,520 1118,538 1165,550 1182,572 1150,590 1075,603 1050,615 1065,630 1120,637 1175,648 1188,662 1150,680 1112,690 1130,702 1105,717 1132,735 1075,743 1048,752 1065,785 1030,797 1045,830 1120,848 1145,860 1075,890 1145,910 1170,1035 1130,1045 1148,1062',580)));
/* price flags */
const flag=(y,h,c,t)=>`<path d="M1778.500 ${y}.5l4 ${-h/2}H1822.500v${h}H1782.500z" fill="#000" stroke="${c}"/>`+txt(1786,y+3,t,'#fff',9,'start','stroke="#fff" stroke-width=".2"');
[[31,15,'#800000','1461.75'],[73,15,'#800000','1455.25'],[113,15,'#800000','1449.00'],[146,15,'#800000','1444.00'],[186,15,'#800000','1437.75'],[251,15,'#800000','1427.75'],[290,12,'#0f0','1421.75'],[314,14,'#807000','1418.00'],[350,15,'#004000','1412.50'],[389,15,'#004000','1406.50'],[429,15,'#006400','1400.25'],[494,15,'#004000','1390.25'],[582,13,'#f00','1376.75'],[575,15,'#807000','1377.75'],[640,13,'#0c0','1367.75'],[629,12,'#f00','1369.50'],[648,15,'#003800','1366.50'],[678,12,'#f00','1362.00'],[707,15,'#004000','1357.50'],[721,12,'#f00','1355.25'],[785,12,'#0f0','1345.50'],[801,12,'#d00000','1343.00'],[815,15,'#003800','1340.75'],[845,12,'#0c0','1336.25'],[851,15,'#003800','1335.25'],[906,12,'#f00','1326.75'],[927,14,'#004000','1323.50']].forEach(f=>s+=flag(...f));
s+=`<g class="crisp" stroke="${LG}"><path d="M1823.500 23V934M1345 934.500H1824"/>`;
for(let p=1330;p<=1460;p+=10)s+=`<path d="M1824 ${Math.round(107+(1450-p)*6.48)}.5h6"/>`;
[23,68,102,135,225,270,348,404,449,493,571,627,672,717,795,895].forEach(x=>s+=`<path d="M${Math.round(rx(x))}.5 935v6"/>`);
s+='</g>';
for(let p=1330;p<=1450;p+=10)if(p!==1400)s+=txt(1832,Math.round(113+(1450-p)*6.48),p+'.00',LG,16);
[[1388,'11/26'],[1464,'12/2'],[1544,'12/9'],[1624,'12/16']].forEach(a=>s+=txt(a[0],955,a[1],LG,16,'middle'));
const big=(y,f,t,c)=>`<path d="M1825.500 ${y+10}l8-10H1896.500v20H1833.500z" fill="${f}" stroke="${LG}"/>`+txt(1836,y+16,t,c,16);
s+=big(329,'#ff0','1414.25','#000')+big(419,'#8b0000','1400.25',LG);
const sum=(x,y,a,b)=>{s+=txt(x,y,'∑ '+a,'#e0e0e0',8,'end','class="tiny"')+txt(x,y+11,'↕'+b,'#e0e0e0',8,'end','class="tiny"')};
sum(1595,353,'3204K','16.25pts');sum(1623,421,'1543K','19.50pts');sum(1563,520,'12963K','27.50pts');sum(1427,609,'6719K','25.75pts');sum(1375,886,'17283K','53.50pts');
s+=rect(1685.5,883.5,128,41,'#000',`stroke="${LG}"`)+txt(1749,901,'Composite Start:','#fff',13,'middle')+txt(1749,915,'6/3/2012 (196d)','#fff',13,'middle');
s+=`<path d="M1793.500 28.500v20l15-10zM1810.500 28.500h3v20h-3z" fill="none" stroke="${LG}"/>`;
document.getElementById('sidechart').innerHTML=s;
</script>
</body>
</html>
